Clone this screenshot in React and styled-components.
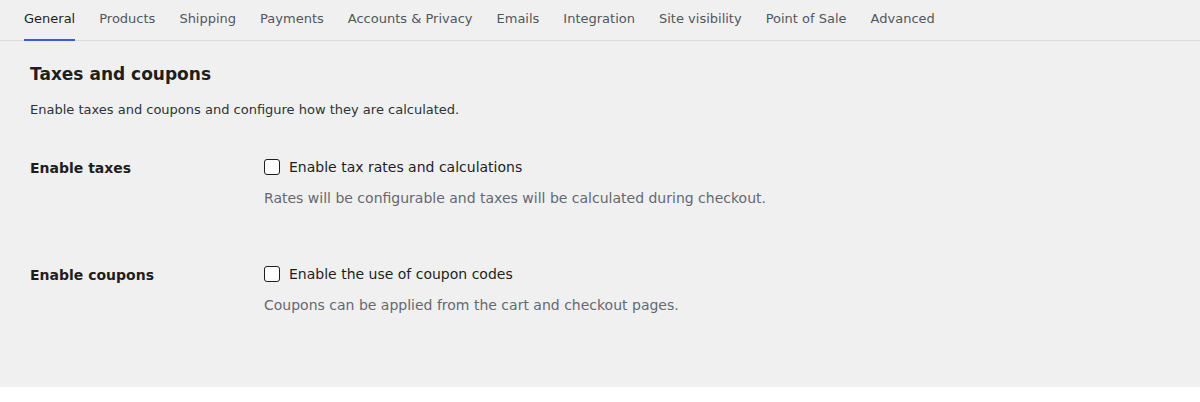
import React from 'react';
import styled, { createGlobalStyle } from 'styled-components';

const Global = createGlobalStyle`
  html, body { margin: 0; padding: 0; background: #fff; }
  body { font-family: "DejaVu Sans", sans-serif; color: #1e1e1e; }
`;

const Page = styled.div`
  background: #f0f0f0;
  height: 387px;
`;

const Tabs = styled.nav`
  display: flex;
  gap: 24px;
  padding: 0 24px;
  height: 40px;
  border-bottom: 1px solid #dcdcde;
`;

const Tab = styled.a`
  display: flex;
  align-items: center;
  padding-bottom: 3px;
  font-size: 13px;
  color: ${p => (p.$active ? '#1e1e1e' : '#50575e')};
  border-bottom: 2px solid ${p => (p.$active ? '#3858e9' : 'transparent')};
  margin-bottom: -1px;
  text-decoration: none;
  cursor: pointer;
`;

const Section = styled.section`
  padding: 21px 30px 0;
`;

const Heading = styled.h2`
  margin: 0;
  font-size: 17px;
  font-weight: 700;
  line-height: 24px;
`;

const Intro = styled.p`
  margin: 14px 0 0;
  font-size: 13px;
  line-height: 20px;
  color: #2c3338;
`;

const Rows = styled.div`
  display: flex;
  flex-direction: column;
  gap: 56px;
  margin-top: 37px;
`;

const Row = styled.div`
  display: grid;
  grid-template-columns: 234px 1fr;
`;

const Label = styled.div`
  font-size: 14px;
  font-weight: 700;
  line-height: 20px;
  padding-top: 1px;
`;

const Field = styled.div`
  display: flex;
  flex-direction: column;
  gap: 11px;
`;

const CheckLine = styled.label`
  display: flex;
  align-items: center;
  gap: 9px;
  font-size: 14px;
  line-height: 20px;
  color: #1e1e1e;
`;

const Box = styled.span`
  width: 16px;
  height: 16px;
  box-sizing: border-box;
  border: 1px solid #1e1e1e;
  border-radius: 3px;
  background: #fff;
`;

const Help = styled.p`
  margin: 0;
  font-size: 14px;
  line-height: 20px;
  color: #646970;
`;

const tabs = ['General', 'Products', 'Shipping', 'Payments', 'Accounts & Privacy', 'Emails', 'Integration', 'Site visibility', 'Point of Sale', 'Advanced'];

const settings = [
  { label: 'Enable taxes', check: 'Enable tax rates and calculations', help: 'Rates will be configurable and taxes will be calculated during checkout.' },
  { label: 'Enable coupons', check: 'Enable the use of coupon codes', help: 'Coupons can be applied from the cart and checkout pages.' },
];

export default function App() {
  return (
    <Page>
      <Global />
      <Tabs>
        {tabs.map((t, i) => (
          <Tab key={t} $active={i === 0}>{t}</Tab>
        ))}
      </Tabs>
      <Section>
        <Heading>Taxes and coupons</Heading>
        <Intro>Enable taxes and coupons and configure how they are calculated.</Intro>
        <Rows>
          {settings.map(s => (
            <Row key={s.label}>
              <Label>{s.label}</Label>
              <Field>
                <CheckLine><Box />{s.check}</CheckLine>
                <Help>{s.help}</Help>
              </Field>
            </Row>
          ))}
        </Rows>
      </Section>
    </Page>
  );
}
